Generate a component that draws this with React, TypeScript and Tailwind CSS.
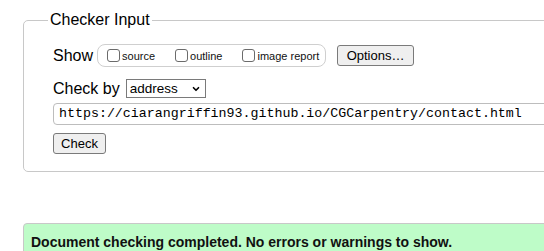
import { ChevronDown } from "lucide-react";

function Box({ label }: { label: string }) {
  return (
    <label className="flex items-end">
      <span className="h-[13px] w-[13px] rounded-[3px] border border-[#6b6b6b] bg-white" />
      <span className="ml-[2px] text-[11px] leading-[12px] text-[#111]">{label}</span>
    </label>
  );
}

function Btn({ children, className }: { children: React.ReactNode; className?: string }) {
  return (
    <button
      className={`flex h-[21px] items-center justify-center rounded-[3px] border border-[#7a7a7a] bg-[#efefef] text-[13px] leading-none text-black ${className ?? ""}`}
    >
      {children}
    </button>
  );
}

export default function App() {
  return (
    <div
      className="h-[251px] w-[544px] overflow-hidden bg-white text-black"
      style={{ fontFamily: '"Liberation Sans", Arial, sans-serif' }}
    >
      <fieldset className="ml-[23px] mt-[11px] w-[600px] rounded-[5px] border border-[#c8c8c8] pb-[17px]">
        <legend className="ml-[24px] px-[2px] text-[16px] leading-[18px]">Checker Input</legend>

        <div className="pl-[29px]">
          <div className="mt-[15px] flex items-center">
            <span className="text-[16px] leading-[18px]">Show</span>
            <div className="ml-[4px] flex h-[23px] w-[229px] items-center gap-[20px] rounded-[8px] border border-[#cfcfcf] pl-[9px]">
              <Box label="source" />
              <Box label="outline" />
              <Box label="image report" />
            </div>
            <Btn className="ml-[11px] w-[77px]">Options…</Btn>
          </div>

          <div className="mt-[12px] flex items-center">
            <span className="text-[16px] leading-[18px]">Check by</span>
            <div className="ml-[6px] flex h-[19px] w-[80px] items-center justify-between border border-[#7a7a7a] bg-white pl-[3px] pr-[4px]">
              <span className="text-[13.5px] leading-none">address</span>
              <ChevronDown size={10} strokeWidth={4} />
            </div>
          </div>

          <div
            className="mt-[5px] flex h-[22px] w-[560px] items-center rounded-[4px] border border-[#bdbdbd] pl-[5px] text-[13.3px] leading-none"
            style={{ fontFamily: '"Liberation Mono", "DejaVu Sans Mono", monospace' }}
          >
            https://ciarangriffin93.github.io/CGCarpentry/contact.html
          </div>

          <Btn className="mt-[8px] w-[53px]">Check</Btn>
        </div>
      </fieldset>

      <div className="ml-[23px] mt-[51px] w-[600px] rounded-tl-[4px] border border-[#c8c8c8] bg-[#befcc8] pb-[10px] pl-[7px] pt-[10px] text-[14px] font-bold leading-[16px] text-[#111]">
        Document checking completed. No errors or warnings to show.
      </div>
    </div>
  );
}
